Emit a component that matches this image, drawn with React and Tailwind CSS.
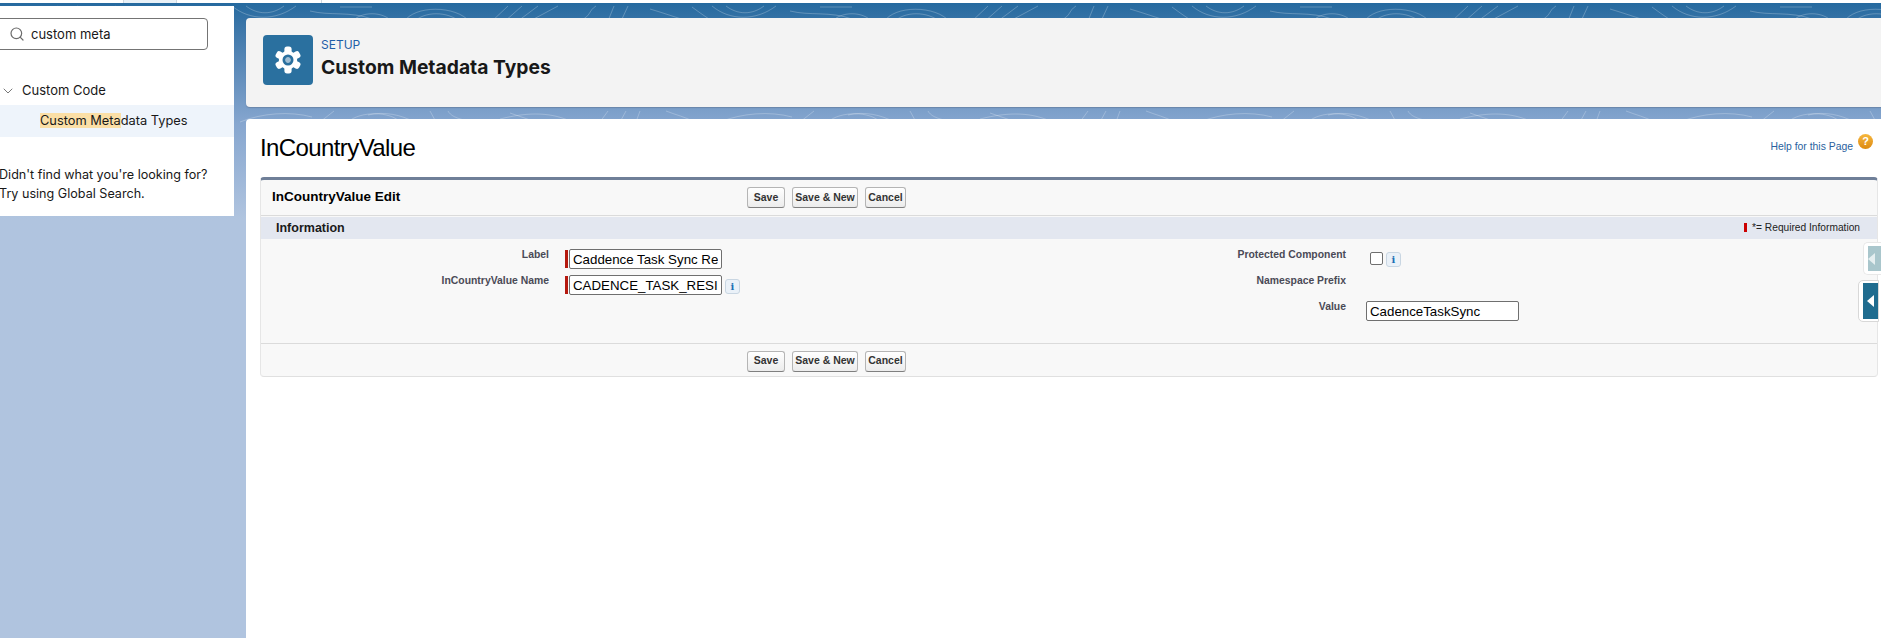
import { Search, ChevronDown } from 'lucide-react';

const sans = "font-['Liberation_Sans',Arial,sans-serif]";

function Buttons() {
  return (
    <div className="flex gap-[7px]">
      <button className="w-[38px] h-[21px] rounded-[3px] border border-[#b5b5b5] border-b-[#7f7f7f] bg-gradient-to-b from-white to-[#ececec] text-[10.5px] font-bold text-[#333]">Save</button>
      <button className="w-[66px] h-[21px] rounded-[3px] border border-[#b5b5b5] border-b-[#7f7f7f] bg-gradient-to-b from-white to-[#ececec] text-[10.5px] font-bold text-[#333]">Save &amp; New</button>
      <button className="w-[41px] h-[21px] rounded-[3px] border border-[#b5b5b5] border-b-[#7f7f7f] bg-gradient-to-b from-white to-[#ececec] text-[10.5px] font-bold text-[#333]">Cancel</button>
    </div>
  );
}

function InfoIcon() {
  return (
    <span className="w-[15px] h-[15px] flex items-center justify-center rounded-[3px] border border-[#c9d6e2] bg-[#eaf1f8] text-[10px] font-bold text-[#1b6fb5] font-['DejaVu_Serif',serif]">i</span>
  );
}

function FieldLabel({ children }) {
  return <div className="h-[26px] text-right text-[10.4px] leading-[12px] font-bold text-[#4a4a56]">{children}</div>;
}

function TextField({ value, className }) {
  return (
    <input
      readOnly
      value={value}
      className={`h-[20px] border border-[#6f6f6f] rounded-[2px] bg-white px-[3px] text-[13.3px] text-black outline-none ${className}`}
    />
  );
}

function RequiredField({ value, info }) {
  return (
    <div className="h-[26px] flex items-start pl-[16px]">
      <span className="w-[3px] h-[18px] mt-[1px] bg-[#b5190f] mr-px" />
      <TextField value={value} className="w-[153px]" />
      {info && <span className="ml-[3px] mt-[4px]"><InfoIcon /></span>}
    </div>
  );
}

function Contours() {
  return (
    <svg className="absolute inset-0 w-full h-[125px]" aria-hidden="true">
      <defs>
        <pattern id="contour" width="480" height="125" patternUnits="userSpaceOnUse">
          <g fill="none" stroke="#ffffff" strokeOpacity="0.24" strokeWidth="1">
            <path d="M10 20 L28 3 M24 19 L42 3 M38 18 L58 3 M50 18 L78 3" />
            <path d="M100 18 C112 12 108 8 116 3 M128 18 L134 3 M142 16 L148 3" />
            <path d="M170 6 C190 12 200 16 212 19 M212 4 C220 10 226 14 232 18" />
            <path d="M232 3 C250 18 276 18 296 3 M246 3 C258 12 272 12 284 3" />
            <path d="M310 8 C330 13 350 8 372 16 M352 19 C360 8 384 8 392 19 M340 4 L372 4" />
            <path d="M404 19 C414 2 456 2 470 19 M414 19 C424 8 448 8 460 19" />
            <path d="M20 116 C44 110 68 108 90 118 M30 110 L56 119 M120 119 L128 108 M140 119 L146 108 M156 119 L160 108" />
            <path d="M186 108 C196 112 206 114 214 119 M240 119 C262 110 290 108 312 114" />
            <path d="M320 119 L334 108 M348 119 C360 108 390 108 400 119 M368 112 C384 108 402 112 414 119 M430 108 L436 119 M448 108 C450 112 456 116 470 118" />
          </g>
        </pattern>
      </defs>
      <rect width="100%" height="125" fill="url(#contour)" />
    </svg>
  );
}

function Gear() {
  const lobes = [0, 60, 120, 180, 240, 300];
  return (
    <svg width="28" height="28" viewBox="-14 -14 28 28">
      {lobes.map((a) => (
        <rect key={a} x="-3.6" y="-13.4" width="7.2" height="8" rx="2.6" fill="#fff" transform={`rotate(${a})`} />
      ))}
      <circle r="9.2" fill="#fff" />
      <circle r="4.2" fill="#9fbdd3" stroke="#2a709f" strokeWidth="2.6" />
    </svg>
  );
}

export default function App() {
  return (
    <div className={`w-full h-[638px] overflow-hidden flex flex-col bg-white ${sans}`}>
      {/* browser strip */}
      <div className="h-[3px] shrink-0 flex bg-white">
        <div className="w-[123px]" />
        <div className="w-[54px] bg-[#e9f1f7] border-x border-[#cfd8e0]" />
        <div className="w-[145px] border-r border-[#cfd8e0]" />
      </div>

      <div className="relative flex-1 flex bg-gradient-to-b from-[#256a9f] from-0% via-[#86a6cf] via-[19%] to-[#b0c4df] to-[34%]">
        <Contours />

        {/* setup tree */}
        <aside className="relative w-[234px] h-[210px] mt-[3px] bg-white font-['Inter',sans-serif] text-[#181818]">
          <div className="mt-[12px] ml-[-6px] w-[214px] h-[32px] flex items-center rounded-[4px] border border-[#747474] bg-white pl-[14px]">
            <Search size={16} strokeWidth={1.8} className="text-[#6b6b6b]" />
            <span className="ml-[6px] pt-[2px] text-[13px]">custom meta</span>
          </div>
          <div className="h-[55px] pt-[26px] flex items-center text-[13px]">
            <ChevronDown size={16} strokeWidth={1.2} className="text-[#555]" />
            <span className="ml-[6px]">Custom Code</span>
          </div>
          <div className="h-[32px] pb-[1px] flex items-center pl-[40px] bg-[#eef4fb] text-[12.8px]">
            <span className="bg-[#fbdfa6] leading-[15px]">Custom Meta</span>
            <span className="leading-[15px]">data Types</span>
          </div>
          <p className="mt-[28px] ml-[-1px] text-[12.6px] leading-[19px] whitespace-nowrap">
            Didn't find what you're looking for?
            <br />
            Try using Global Search.
          </p>
        </aside>

        <main className="relative ml-[12px] flex-1 flex flex-col mt-[15px]">
          {/* page header */}
          <header className="h-[89px] shrink-0 flex items-start rounded-l-[4px] bg-[#f3f3f3] shadow-[0_1px_1px_rgba(90,110,140,0.5)] pl-[17px] pt-[17px] font-['Inter',sans-serif]">
            <div className="w-[50px] h-[50px] flex items-center justify-center rounded-[4px] bg-[#2a709f]">
              <Gear />
            </div>
            <div className="ml-[8px]">
              <div className="mt-[3px] text-[12px] leading-[14px] text-[#1f5ea8]">SETUP</div>
              <h1 className="mt-[2px] text-[19.3px] leading-[26px] font-bold text-[#181818]">Custom Metadata Types</h1>
            </div>
          </header>

          <section className="relative mt-[12px] flex-1 bg-white rounded-tl-[4px] pl-[14px] pr-[3px]">
            <div className="h-[58px] flex items-start justify-between">
              <h2 className="mt-[15px] text-[24px] leading-[28px] text-black tracking-[-0.6px]">InCountryValue</h2>
              <div className="flex items-start mt-[15px] pr-[5px]">
                <a className="text-[10.4px] leading-[12px] text-[#2a5f9e] mt-[7px]">Help for this Page</a>
                <span className="ml-[5px] w-[15px] h-[15px] rounded-full bg-gradient-to-b from-[#f6b73c] to-[#dd8a0d] flex items-center justify-center text-[11px] font-bold text-white">?</span>
              </div>
            </div>

            {/* edit block */}
            <div className="border-t-[3px] border-t-[#6f7f98] border border-x-[#e6e6e6] border-b-[#e0e0e0] rounded-[4px] bg-[#f8f8f8]">
              <div className="h-[36px] flex items-center border-b border-[#dbdbdb]">
                <div className="w-[486px] pl-[11px] text-[13.5px] font-bold text-black">InCountryValue Edit</div>
                <Buttons />
              </div>
              <div className="h-[22px] mt-px flex items-center justify-between bg-[#e3e7f0] pl-[15px] pr-[17px]">
                <span className="text-[12.5px] font-bold text-[#1a1a1a]">Information</span>
                <span className="flex items-center text-[10.2px] text-[#222]">
                  <span className="w-[3px] h-[9px] bg-[#c00] mr-[5px]" />
                  *= Required Information
                </span>
              </div>

              <div className="h-[105px] pt-[10px] grid grid-cols-[288px_498px_299px_1fr] auto-rows-[26px] border-b border-[#dbdbdb]">
                <FieldLabel>Label</FieldLabel>
                <RequiredField value="Caddence Task Sync Reminder" />
                <FieldLabel>Protected Component</FieldLabel>
                <div className="pl-[24px] pt-[3px] flex items-start gap-[3px]">
                  <span className="w-[13px] h-[13px] rounded-[2px] border border-[#6f6f6f] bg-white" />
                  <InfoIcon />
                </div>

                <FieldLabel>InCountryValue Name</FieldLabel>
                <RequiredField value="CADENCE_TASK_RESIDENCY" info />
                <FieldLabel>Namespace Prefix</FieldLabel>
                <div />

                <div />
                <div />
                <FieldLabel>Value</FieldLabel>
                <div className="flex items-start pl-[20px]">
                  <TextField value="CadenceTaskSync" className="w-[153px]" />
                </div>
              </div>

              <div className="h-[32px] flex items-center pt-[2px] pl-[486px]">
                <Buttons />
              </div>
            </div>

            {/* collapse tabs */}
            <div className="absolute right-0 top-[123px] w-[18px] h-[33px] rounded-l-[5px] border border-r-0 border-[#e8e8e8] bg-white pl-[4px] pt-[3px]">
              <div className="h-[25px] bg-[#a9c6cc] flex items-center">
                <span className="w-0 h-0 border-y-[6px] border-y-transparent border-r-[7px] border-r-white/70" />
              </div>
            </div>
            <div className="absolute right-[2px] top-[161px] w-[21px] h-[42px] rounded-l-[5px] border border-[#d8d8d8] bg-white pl-[4px] pt-[2px]">
              <div className="h-[36px] bg-[#1f6c8f] flex items-center pl-[4px]">
                <span className="w-0 h-0 border-y-[6px] border-y-transparent border-r-[7px] border-r-white" />
              </div>
            </div>
          </section>
        </main>
      </div>
    </div>
  );
}
